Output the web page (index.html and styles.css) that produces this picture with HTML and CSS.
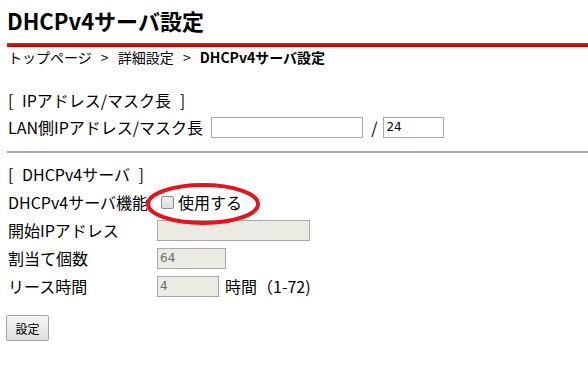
FILE: index.html
```html
<!DOCTYPE html>
<html lang="ja">
<head>
  <meta charset="UTF-8"/>
  <title>DHCPv4サーバ設定</title>
  <link rel="stylesheet" href="styles.css">
</head>
<body>
  <div class="page-head">
    <h1>DHCPv4サーバ設定</h1>
  </div>
  <div class="red-bar"></div>
  <div class="crumbs">トップページ &gt; 詳細設定 &gt; <b>DHCPv4サーバ設定</b></div>

  <div class="section sec-ip">
    <div class="sec-title">[ IPアドレス/マスク長 ]</div>
    <div class="line">
      <span>LAN側IPアドレス/マスク長</span>
      <input type="text" class="ip-box" value="">
      <span class="slash">/</span>
      <input type="text" class="mask-box" value="24">
    </div>
  </div>

  <hr class="divider">

  <div class="section sec-dhcp">
    <div class="sec-title">[ DHCPv4サーバ ]</div>
    <div class="form-grid">
      <div class="lbl">DHCPv4サーバ機能</div>
      <div class="val use-cell">
        <label class="use"><span class="chk"></span>使用する</label>
        <svg class="mark" width="116" height="44" viewBox="0 0 116 44">
          <ellipse cx="58" cy="22" rx="55" ry="19" fill="none" stroke="#e3141c" stroke-width="4"/>
        </svg>
      </div>

      <div class="lbl">開始IPアドレス</div>
      <div class="val"><input type="text" class="dis w-start" disabled></div>

      <div class="lbl">割当て個数</div>
      <div class="val"><input type="text" class="dis w-count" value="64" disabled></div>

      <div class="lbl">リース時間</div>
      <div class="val"><input type="text" class="dis w-lease" value="4" disabled><span class="unit">時間（1-72)</span></div>
    </div>
  </div>

  <button class="btn">設定</button>
</body>
</html>
```

FILE: styles.css
```css
body {
  margin: 0;
  padding: 0 0 0 7px;
  font-family: "Noto Sans CJK JP", sans-serif;
  color: #000;
  background: #fff;
  overflow: hidden;
}

.page-head h1 {
  margin: 0;
  padding-top: 5px;
  height: 38px;
  font-size: 22px;
  line-height: 30px;
  font-weight: bold;
}

.red-bar {
  height: 4px;
  background: linear-gradient(#e01c1c, #b00000);
}

.crumbs {
  font-size: 14px;
  line-height: 18px;
  margin-top: 1px;
  padding-left: 1px;
  word-spacing: 6px;
}

.crumbs b {
  font-weight: bold;
  word-spacing: 0;
}

.section {
  padding-left: 1px;
}

.sec-title {
  font-size: 16px;
  line-height: 24px;
  word-spacing: 5px;
}

.sec-ip .sec-title {
  margin-top: 22px;
}

.line {
  display: flex;
  align-items: center;
  height: 26px;
  font-size: 16px;
  margin-top: 2px;
}

input {
  font-family: "DejaVu Sans", sans-serif;
  font-size: 12px;
  height: 21px;
  box-sizing: border-box;
  border: 1px solid #a9a9a9;
  padding: 0 2px;
  margin: 0;
  background: #fff;
  color: #000;
  outline: none;
}

.ip-box {
  width: 152px;
  margin-left: 8px;
}

.slash {
  margin: 0 6px 0 8px;
}

.mask-box {
  width: 61px;
}

.divider {
  border: 0;
  height: 2px;
  background: #a8a8a8;
  margin: 11px 0 0 0;
}

.sec-dhcp {
  margin-top: 9px;
}

.form-grid {
  display: grid;
  grid-template-columns: 149px 1fr;
  grid-auto-rows: 28px;
  align-items: center;
  font-size: 16px;
  margin-top: 2px;
}

.val {
  display: flex;
  align-items: center;
}

.use-cell {
  position: relative;
}

.use {
  display: flex;
  align-items: center;
}

.chk {
  width: 11px;
  height: 11px;
  border: 1px solid #8f8f8f;
  border-radius: 2px;
  background: linear-gradient(#f0f0f0, #dcdcdc);
  margin: 0 4px 0 4px;
}

.mark {
  position: absolute;
  left: -12px;
  top: -8px;
}

.dis {
  background: #ebeae3;
  color: #6d6d6d;
  border-color: #a9a9a9;
}

.w-start { width: 153px; }
.w-count { width: 69px; }
.w-lease { width: 62px; }

.unit {
  margin-left: 6px;
}

.btn {
  margin: 15px 0 0 -1px;
  width: 43px;
  height: 26px;
  font-family: "Noto Sans CJK JP", sans-serif;
  font-size: 12px;
  border: 1px solid #a3a3a3;
  border-radius: 2px;
  background: linear-gradient(#f6f6f6, #dedede);
  padding: 0;
  color: #000;
}
```
